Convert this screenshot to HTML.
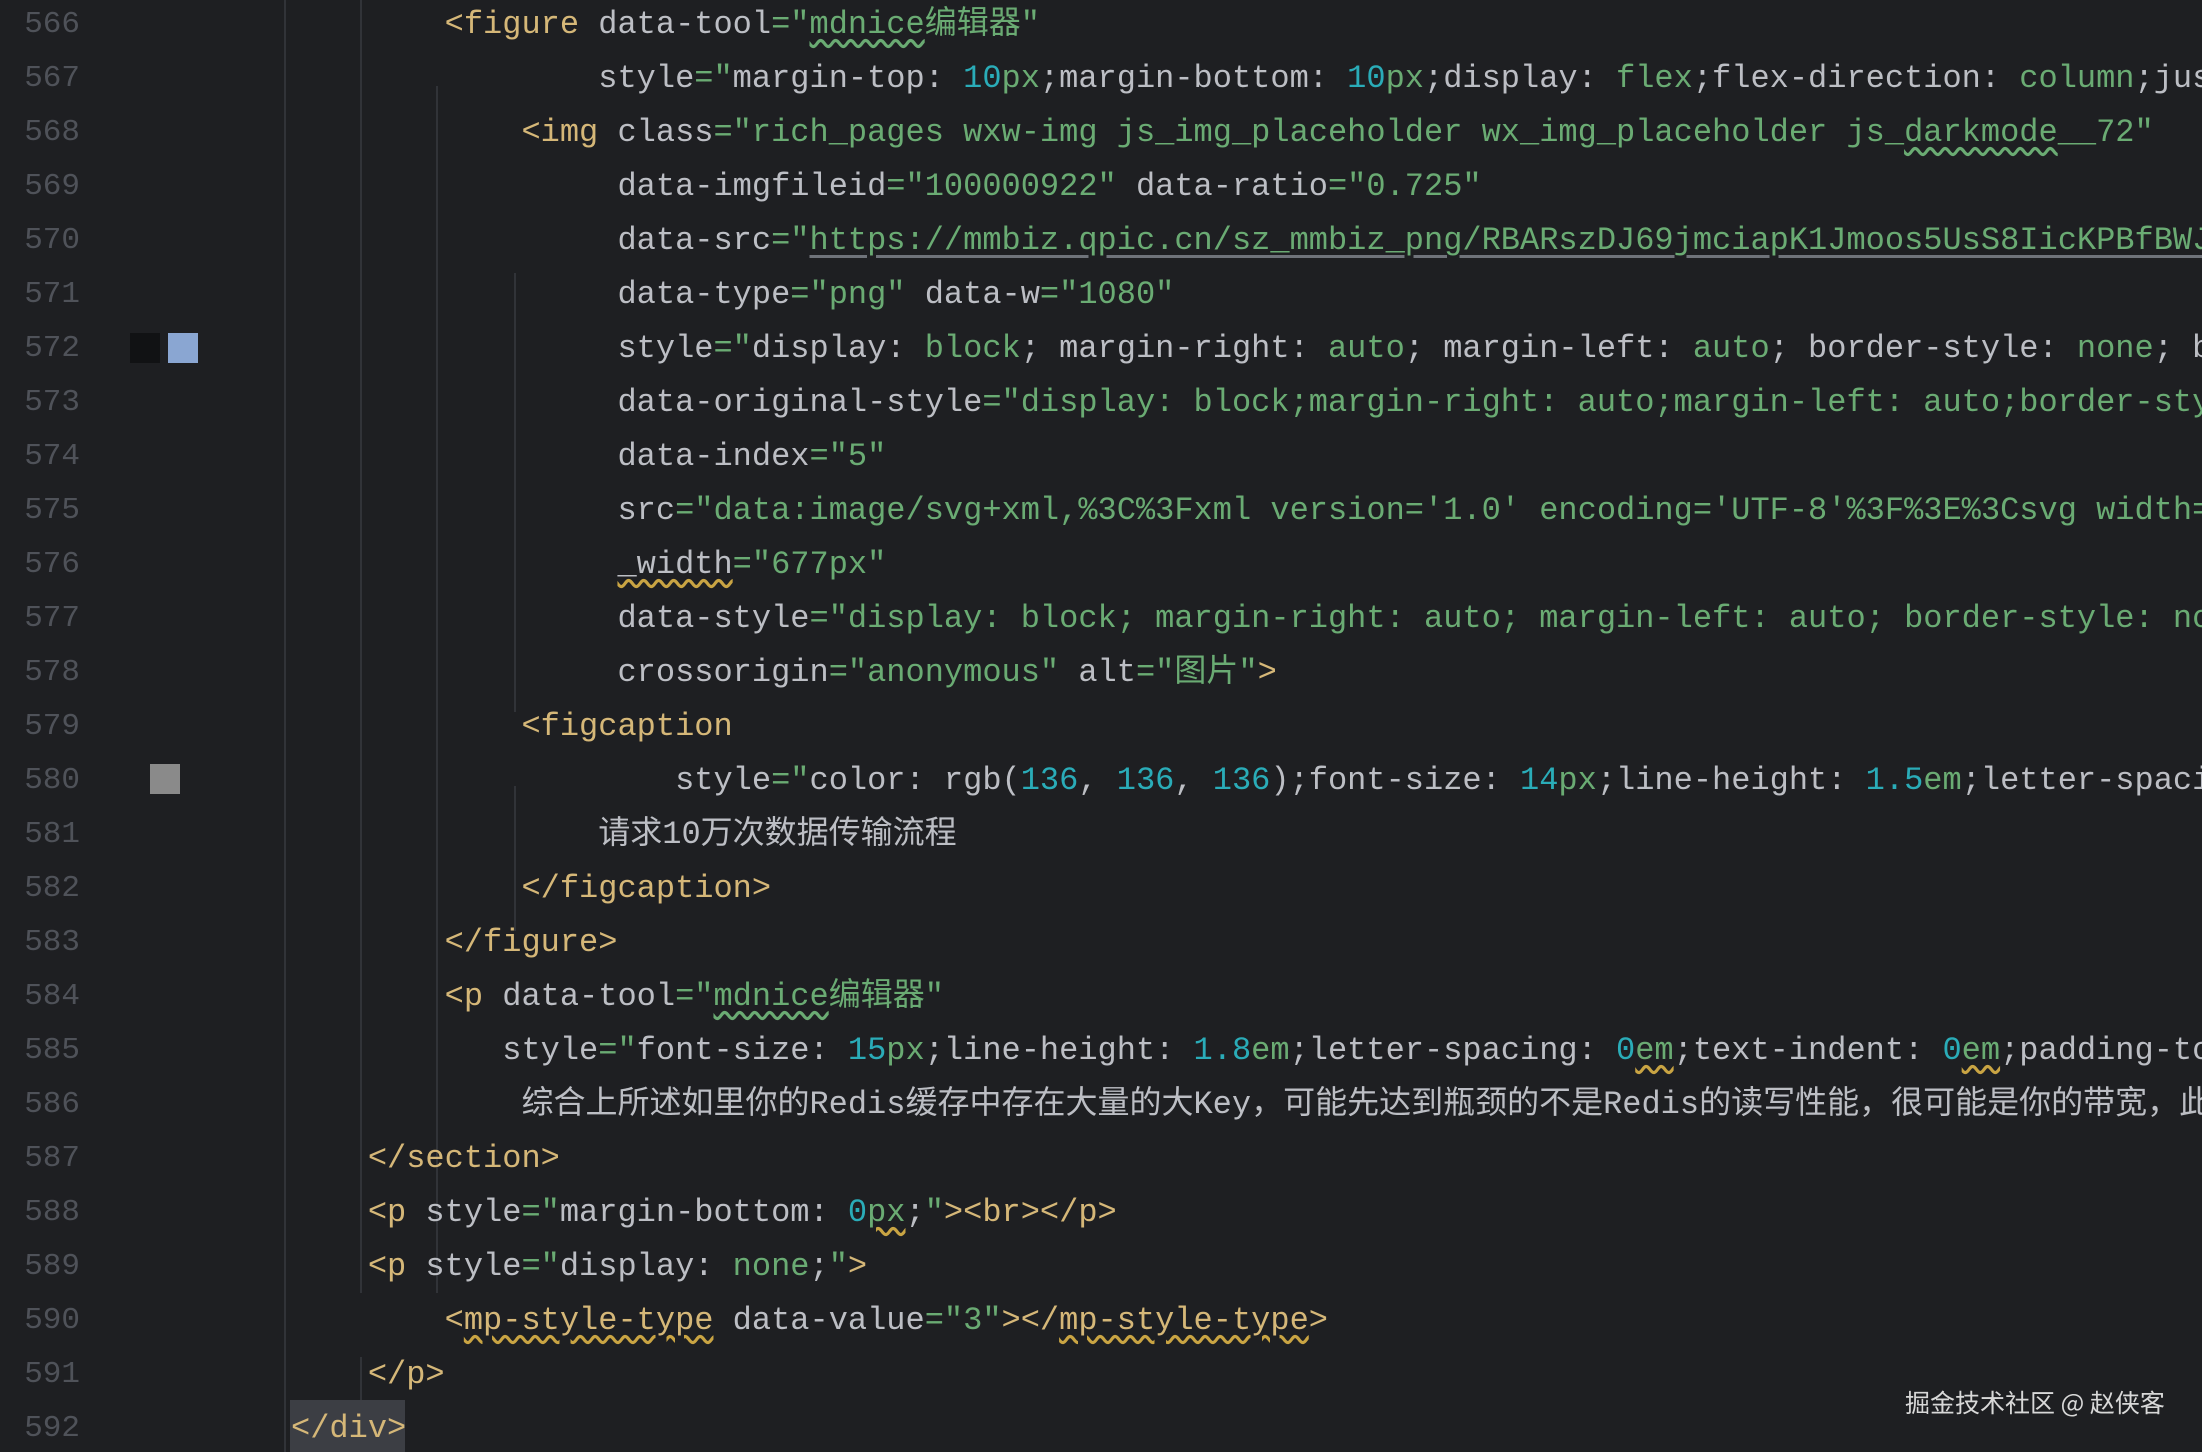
<!DOCTYPE html>
<html><head><meta charset="utf-8"><style>
html,body{margin:0;padding:0;background:#1e1f22;width:2202px;height:1452px;overflow:hidden}
#wrap{position:absolute;left:0;top:0;width:2202px;height:1452px;overflow:hidden}
.ln{position:absolute;left:0;width:80px;text-align:right;font-family:"Liberation Mono",monospace;font-size:31px;color:#4f5259;height:54px;line-height:54px}
.l{position:absolute;left:291px;white-space:pre;font-family:"Liberation Mono","Noto Sans CJK SC",monospace;font-size:32px;color:#bcbec4;height:54px;line-height:54px}
.t{color:#d5b778}.s{color:#6aab73}.n{color:#2aacb8}
.w{text-decoration:underline wavy #6aab73;text-underline-offset:6px}
.wy{text-decoration:underline wavy #c9a443;text-underline-offset:6px}
.u{text-decoration:underline;text-decoration-color:#6f737a;text-underline-offset:6px}
.g{position:absolute;width:2px;background:#313338}
</style></head><body><div id="wrap">
<div class="g" style="left:284px;top:0;height:1452px"></div>
<div class="g" style="left:360px;top:0;height:1293px"></div>
<div class="g" style="left:360px;top:1357px;height:72px"></div>
<div class="g" style="left:436px;top:86px;height:1207px"></div>
<div class="g" style="left:514px;top:273px;height:439px"></div>
<div class="g" style="left:514px;top:786px;height:145px"></div>
<div style="position:absolute;left:130px;top:333px;width:30px;height:30px;background:#111214"></div>
<div style="position:absolute;left:168px;top:333px;width:30px;height:30px;background:#8aa6d2"></div>
<div style="position:absolute;left:150px;top:764px;width:30px;height:30px;background:#8a8a8a"></div>
<div style="position:absolute;left:290px;top:1400px;width:115px;height:52px;background:#3c3e44"></div>

<div class="ln" style="top:-2px">566</div>
<div class="ln" style="top:52px">567</div>
<div class="ln" style="top:106px">568</div>
<div class="ln" style="top:160px">569</div>
<div class="ln" style="top:214px">570</div>
<div class="ln" style="top:268px">571</div>
<div class="ln" style="top:322px">572</div>
<div class="ln" style="top:376px">573</div>
<div class="ln" style="top:430px">574</div>
<div class="ln" style="top:484px">575</div>
<div class="ln" style="top:538px">576</div>
<div class="ln" style="top:592px">577</div>
<div class="ln" style="top:646px">578</div>
<div class="ln" style="top:700px">579</div>
<div class="ln" style="top:754px">580</div>
<div class="ln" style="top:808px">581</div>
<div class="ln" style="top:862px">582</div>
<div class="ln" style="top:916px">583</div>
<div class="ln" style="top:970px">584</div>
<div class="ln" style="top:1024px">585</div>
<div class="ln" style="top:1078px">586</div>
<div class="ln" style="top:1132px">587</div>
<div class="ln" style="top:1186px">588</div>
<div class="ln" style="top:1240px">589</div>
<div class="ln" style="top:1294px">590</div>
<div class="ln" style="top:1348px">591</div>
<div class="ln" style="top:1402px">592</div>

<div class="l" style="top:-2px">        <span class="t">&lt;figure</span> data-tool<span class="s">="<span class="w">mdnice</span>编辑器"</span></div>
<div class="l" style="top:52px">                style<span class="s">="</span>margin-top: <span class="n">10</span><span class="s">px</span>;margin-bottom: <span class="n">10</span><span class="s">px</span>;display: <span class="s">flex</span>;flex-direction: <span class="s">column</span>;jus</div>
<div class="l" style="top:106px">            <span class="t">&lt;img</span> class<span class="s">="rich_pages wxw-img js_img_placeholder wx_img_placeholder js_<span class="w">darkmode</span>__72"</span></div>
<div class="l" style="top:160px">                 data-imgfileid<span class="s">="100000922"</span> data-ratio<span class="s">="0.725"</span></div>
<div class="l" style="top:214px">                 data-src<span class="s">="<span class="u">https://mmbiz.qpic.cn/sz_mmbiz_png/RBARszDJ69jmciapK1Jmoos5UsS8IicKPBfBWJ</span></span></div>
<div class="l" style="top:268px">                 data-type<span class="s">="png"</span> data-w<span class="s">="1080"</span></div>
<div class="l" style="top:322px">                 style<span class="s">="</span>display: <span class="s">block</span>; margin-right: <span class="s">auto</span>; margin-left: <span class="s">auto</span>; border-style: <span class="s">none</span>; b</div>
<div class="l" style="top:376px">                 data-original-style<span class="s">="display: block;margin-right: auto;margin-left: auto;border-sty</span></div>
<div class="l" style="top:430px">                 data-index<span class="s">="5"</span></div>
<div class="l" style="top:484px">                 src<span class="s">="data:image/svg+xml,%3C%3Fxml version='1.0' encoding='UTF-8'%3F%3E%3Csvg width=</span></div>
<div class="l" style="top:538px">                 <span class="wy">_width</span><span class="s">="677px"</span></div>
<div class="l" style="top:592px">                 data-style<span class="s">="display: block; margin-right: auto; margin-left: auto; border-style: no</span></div>
<div class="l" style="top:646px">                 crossorigin<span class="s">="anonymous"</span> alt<span class="s">="图片"</span><span class="t">&gt;</span></div>
<div class="l" style="top:700px">            <span class="t">&lt;figcaption</span></div>
<div class="l" style="top:754px">                    style<span class="s">="</span>color: rgb(<span class="n">136</span>, <span class="n">136</span>, <span class="n">136</span>);font-size: <span class="n">14</span><span class="s">px</span>;line-height: <span class="n">1.5</span><span class="s">em</span>;letter-spaci</div>
<div class="l" style="top:808px">                请求10万次数据传输流程</div>
<div class="l" style="top:862px">            <span class="t">&lt;/figcaption&gt;</span></div>
<div class="l" style="top:916px">        <span class="t">&lt;/figure&gt;</span></div>
<div class="l" style="top:970px">        <span class="t">&lt;p</span> data-tool<span class="s">="<span class="w">mdnice</span>编辑器"</span></div>
<div class="l" style="top:1024px">           style<span class="s">="</span>font-size: <span class="n">15</span><span class="s">px</span>;line-height: <span class="n">1.8</span><span class="s">em</span>;letter-spacing: <span class="n">0</span><span class="s wy">em</span>;text-indent: <span class="n">0</span><span class="s wy">em</span>;padding-to</div>
<div class="l" style="top:1078px">            综合上所述如里你的Redis缓存中存在大量的大Key，可能先达到瓶颈的不是Redis的读写性能，很可能是你的带宽，此</div>
<div class="l" style="top:1132px">    <span class="t">&lt;/section&gt;</span></div>
<div class="l" style="top:1186px">    <span class="t">&lt;p</span> style<span class="s">="</span>margin-bottom: <span class="n">0</span><span class="s wy">px</span>;<span class="s">"</span><span class="t">&gt;&lt;br&gt;&lt;/p&gt;</span></div>
<div class="l" style="top:1240px">    <span class="t">&lt;p</span> style<span class="s">="</span>display: <span class="s">none</span>;<span class="s">"</span><span class="t">&gt;</span></div>
<div class="l" style="top:1294px">        <span class="t">&lt;<span class="wy">mp-style-type</span></span> data-value<span class="s">="3"</span><span class="t">&gt;&lt;/<span class="wy">mp-style-type</span>&gt;</span></div>
<div class="l" style="top:1348px">    <span class="t">&lt;/p&gt;</span></div>
<div class="l" style="top:1402px"><span class="t">&lt;/div&gt;</span></div>

<div style="position:absolute;left:1905px;top:1384px;font-family:'Noto Sans CJK SC',sans-serif;font-size:25px;color:#d8d8d8;white-space:nowrap">掘金技术社区 @ 赵侠客</div>
</div></body></html>
